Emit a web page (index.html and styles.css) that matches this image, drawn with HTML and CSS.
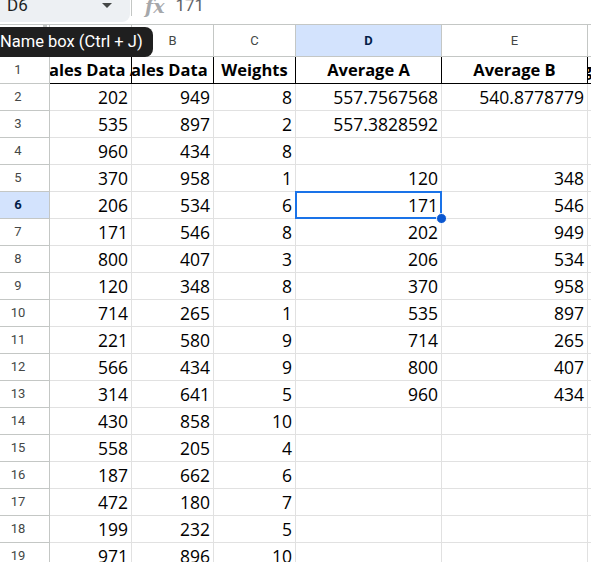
FILE: index.html
```html
<!DOCTYPE html>
<html>
<head>
<meta charset="utf-8">
<link rel="stylesheet" href="styles.css">
</head>
<body>
<div class="sheet">
  <div class="formula-bar">
    <div class="name-box"><span class="name-text">D6</span><span class="caret"></span></div>
    <div class="sep"></div>
    <div class="fx">fx</div>
    <div class="formula">171</div>
  </div>
  <div class="grid">
    <div class="ch corner"><span class="handle"></span></div>
    <div class="ch">A</div><div class="ch">B</div><div class="ch">C</div><div class="ch active">D</div><div class="ch">E</div><div class="ch">F</div>

    <div class="rh">1</div>
    <div class="c h"><span>Sales Data A</span></div><div class="c h"><span>Sales Data B</span></div><div class="c h"><span>Weights</span></div><div class="c h"><span>Average A</span></div><div class="c h"><span>Average B</span></div><div class="c h f"><span>ge</span></div>

    <div class="rh">2</div><div class="c">202</div><div class="c">949</div><div class="c">8</div><div class="c">557.7567568</div><div class="c">540.8778779</div><div class="c"></div>
    <div class="rh">3</div><div class="c">535</div><div class="c">897</div><div class="c">2</div><div class="c">557.3828592</div><div class="c"></div><div class="c"></div>
    <div class="rh">4</div><div class="c">960</div><div class="c">434</div><div class="c">8</div><div class="c"></div><div class="c"></div><div class="c"></div>
    <div class="rh">5</div><div class="c">370</div><div class="c">958</div><div class="c">1</div><div class="c">120</div><div class="c">348</div><div class="c"></div>
    <div class="rh active">6</div><div class="c">206</div><div class="c">534</div><div class="c">6</div><div class="c sel">171<span class="fill-handle"></span></div><div class="c">546</div><div class="c"></div>
    <div class="rh">7</div><div class="c">171</div><div class="c">546</div><div class="c">8</div><div class="c">202</div><div class="c">949</div><div class="c"></div>
    <div class="rh">8</div><div class="c">800</div><div class="c">407</div><div class="c">3</div><div class="c">206</div><div class="c">534</div><div class="c"></div>
    <div class="rh">9</div><div class="c">120</div><div class="c">348</div><div class="c">8</div><div class="c">370</div><div class="c">958</div><div class="c"></div>
    <div class="rh">10</div><div class="c">714</div><div class="c">265</div><div class="c">1</div><div class="c">535</div><div class="c">897</div><div class="c"></div>
    <div class="rh">11</div><div class="c">221</div><div class="c">580</div><div class="c">9</div><div class="c">714</div><div class="c">265</div><div class="c"></div>
    <div class="rh">12</div><div class="c">566</div><div class="c">434</div><div class="c">9</div><div class="c">800</div><div class="c">407</div><div class="c"></div>
    <div class="rh">13</div><div class="c">314</div><div class="c">641</div><div class="c">5</div><div class="c">960</div><div class="c">434</div><div class="c"></div>
    <div class="rh">14</div><div class="c">430</div><div class="c">858</div><div class="c">10</div><div class="c"></div><div class="c"></div><div class="c"></div>
    <div class="rh">15</div><div class="c">558</div><div class="c">205</div><div class="c">4</div><div class="c"></div><div class="c"></div><div class="c"></div>
    <div class="rh">16</div><div class="c">187</div><div class="c">662</div><div class="c">6</div><div class="c"></div><div class="c"></div><div class="c"></div>
    <div class="rh">17</div><div class="c">472</div><div class="c">180</div><div class="c">7</div><div class="c"></div><div class="c"></div><div class="c"></div>
    <div class="rh">18</div><div class="c">199</div><div class="c">232</div><div class="c">5</div><div class="c"></div><div class="c"></div><div class="c"></div>
    <div class="rh">19</div><div class="c">971</div><div class="c">896</div><div class="c">10</div><div class="c"></div><div class="c"></div><div class="c"></div>
  </div>
  <div class="tooltip">Name box (Ctrl + J)</div>
</div>
</body>
</html>
```
FILE: styles.css
```css
html, body {
  margin: 0;
  padding: 0;
  background: #fff;
}
body {
  width: 591px;
  height: 562px;
  overflow: hidden;
  font-family: Roboto, "Liberation Sans", sans-serif;
}
.sheet {
  position: relative;
  width: 591px;
  height: 562px;
  overflow: hidden;
}
.formula-bar {
  height: 24px;
  border-bottom: 1px solid #c4c7c5;
  display: flex;
  align-items: flex-start;
}
.name-box {
  width: 130px;
  height: 22px;
  box-sizing: border-box;
  background: #edf0f3;
  border-bottom-right-radius: 8px;
  display: flex;
  justify-content: space-between;
  align-items: flex-start;
  padding: 0 18px 0 7px;
}
.name-text {
  font-size: 17px;
  line-height: 11px;
  color: #1f1f1f;
}
.caret {
  margin-top: 3px;
  width: 0;
  height: 0;
  border-left: 5px solid transparent;
  border-right: 5px solid transparent;
  border-top: 5px solid #444746;
}
.sep {
  width: 1px;
  height: 16px;
  background: #c4c7c5;
  margin-left: 1px;
}
.fx {
  margin-left: 13px;
  font-family: "DejaVu Serif", "Liberation Serif", serif;
  font-style: italic;
  font-weight: bold;
  font-size: 19px;
  line-height: 13px;
  color: #a6a8ab;
  letter-spacing: 0;
}
.formula {
  margin-left: 11px;
  font-size: 17px;
  line-height: 11px;
  color: #5f6368;
}
.grid {
  display: grid;
  grid-template-columns: 50px 82px 82px 82px 146px 146px 60px;
  grid-template-rows: 32px repeat(19, 27px);
}
.ch {
  box-sizing: border-box;
  border-right: 1px solid #c4c7c5;
  border-bottom: 1px solid #c4c7c5;
  display: flex;
  align-items: center;
  justify-content: center;
  font-size: 13px;
  color: #444746;
}
.ch.active {
  background: #d3e3fd;
  color: #041e49;
  font-weight: bold;
}
.corner {
  position: relative;
}
.handle {
  position: absolute;
  left: 43px;
  top: 0;
  width: 4px;
  height: 6px;
  background: #c4c7c5;
}
.rh {
  box-sizing: border-box;
  border-right: 1px solid #c4c7c5;
  border-bottom: 1px solid #c4c7c5;
  display: flex;
  align-items: center;
  justify-content: center;
  padding-right: 13px;
  padding-bottom: 2px;
  font-size: 13px;
  color: #444746;
}
.rh.active {
  background: #d3e3fd;
  color: #041e49;
  font-weight: bold;
}
.c {
  box-sizing: border-box;
  border-right: 1px solid #e1e1e1;
  border-bottom: 1px solid #e1e1e1;
  display: flex;
  align-items: flex-end;
  justify-content: flex-end;
  padding: 0 3px 2px;
  font-family: "Open Sans", "Noto Sans", sans-serif;
  font-size: 17.5px;
  line-height: 22px;
  color: #000;
  white-space: nowrap;
  overflow: hidden;
}
.c.h {
  justify-content: center;
  font-weight: bold;
  font-size: 16.5px;
  border-right-color: #000;
  border-bottom-color: #000;
  padding: 0 0 2px;
}
.c.h span {
  flex-shrink: 0;
}
.c.h.f {
  justify-content: flex-start;
}
.c.h.f span {
  margin-left: -5px;
}
.c.sel {
  position: relative;
  overflow: visible;
}
.c.sel::before {
  content: "";
  position: absolute;
  left: -1px;
  top: -1px;
  right: -1px;
  bottom: -1px;
  border: 2px solid #1a73e8;
  pointer-events: none;
}
.fill-handle {
  position: absolute;
  right: -6px;
  bottom: -6px;
  width: 9px;
  height: 9px;
  border-radius: 50%;
  background: #0b57d0;
  border: 1px solid #fff;
  z-index: 2;
}
.tooltip {
  position: absolute;
  left: -10px;
  top: 27px;
  width: 163px;
  height: 30px;
  box-sizing: border-box;
  padding-left: 10px;
  background: #1f1f1f;
  border-radius: 8px;
  color: #fff;
  font-size: 16.5px;
  line-height: 30px;
  white-space: nowrap;
}
```
